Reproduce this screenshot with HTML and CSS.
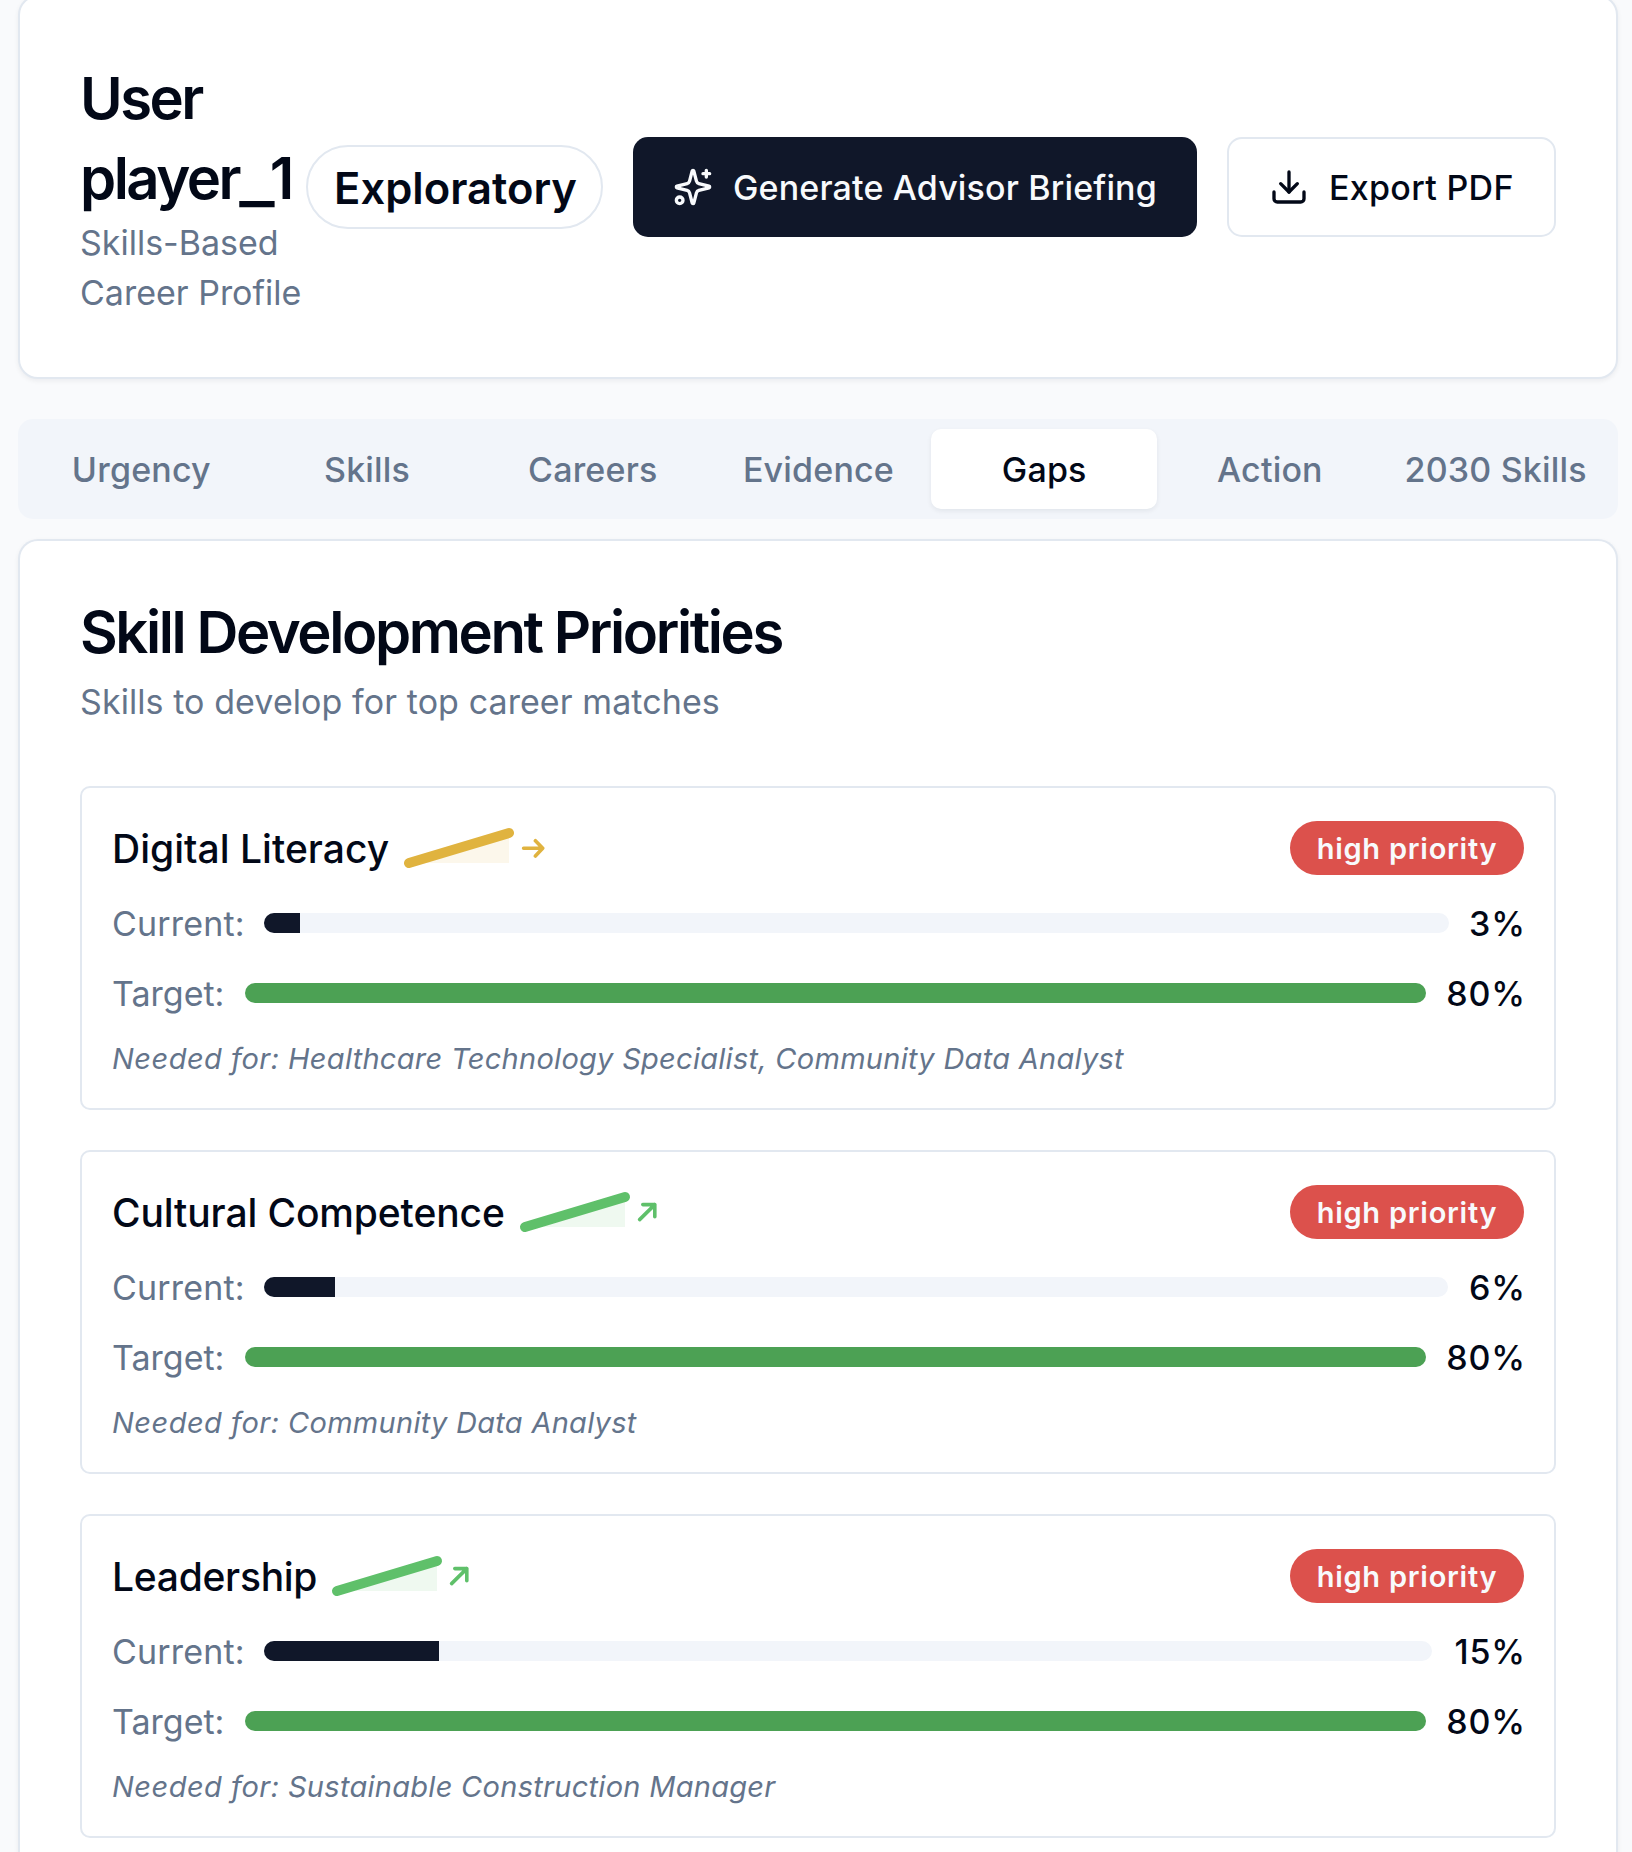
FILE: index.html
```html
<!DOCTYPE html>
<html lang="en">
<head>
<meta charset="utf-8">
<title>Skills-Based Career Profile</title>
<link rel="stylesheet" href="styles.css">
</head>
<body>
<main class="page">
  <header class="card profile">
    <div class="profile-name">
      <h1 class="title user-title">User<br>player<span class="underscore">_</span>1</h1>
      <p class="sub profile-sub">Skills-Based<br>Career Profile</p>
    </div>
    <span class="stage">Exploratory</span>
    <button class="btn btn-primary">
      <svg class="icon" viewBox="0 0 24 24"><path d="M9.937 15.5A2 2 0 0 0 8.5 14.063l-6.135-1.582a.5.5 0 0 1 0-.962L8.5 9.936A2 2 0 0 0 9.937 8.5l1.582-6.135a.5.5 0 0 1 .963 0L14.063 8.5A2 2 0 0 0 15.5 9.937l6.135 1.581a.5.5 0 0 1 0 .964L15.5 14.063a2 2 0 0 0-1.437 1.437l-1.582 6.135a.5.5 0 0 1-.963 0z"/><path d="M20 2v4M22 4h-4"/><circle cx="4" cy="20" r="2"/></svg>
      <span class="btn-text">Generate Advisor Briefing</span>
    </button>
    <button class="btn btn-outline">
      <svg class="icon" viewBox="0 0 24 24"><path d="M21 15v4a2 2 0 0 1-2 2H5a2 2 0 0 1-2-2v-4"/><path d="M7 10l5 5 5-5"/><path d="M12 15V3"/></svg>
      <span class="btn-text">Export PDF</span>
    </button>
  </header>

  <nav class="tabs">
    <a class="tab">Urgency</a>
    <a class="tab">Skills</a>
    <a class="tab">Careers</a>
    <a class="tab">Evidence</a>
    <a class="tab active">Gaps</a>
    <a class="tab">Action</a>
    <a class="tab">2030 Skills</a>
  </nav>

  <section class="card gaps">
    <h2 class="title gaps-title">Skill Development Priorities</h2>
    <p class="sub gaps-sub">Skills to develop for top career matches</p>

    <div class="list">
      <article class="skill">
        <div class="skill-head">
          <h3 class="skill-name">Digital Literacy</h3>
          <svg class="spark flat" viewBox="0 0 110 40"><path class="area" d="M5 35L105 5V35Z"/><path class="line" d="M5 35L105 5"/></svg>
          <svg class="trend flat" viewBox="0 0 24 24"><path d="M2.6 12.3H21M14.4 4.7L21.7 12.3L14.4 20"/></svg>
          <span class="priority">high priority</span>
        </div>
        <div class="meter"><span class="label label-current">Current:</span><div class="bar"><div class="fill" style="width:3.05%"></div></div><span class="value">3%</span></div>
        <div class="meter"><span class="label label-target">Target:</span><div class="bar target"></div><span class="value wide">80%</span></div>
        <p class="needed"><span class="lead">Needed for:</span> Healthcare Technology Specialist, Community Data Analyst</p>
      </article>

      <article class="skill">
        <div class="skill-head">
          <h3 class="skill-name snug">Cultural Competence</h3>
          <svg class="spark up" viewBox="0 0 110 40"><path class="area" d="M5 35L105 5V35Z"/><path class="line" d="M5 35L105 5"/></svg>
          <svg class="trend up" viewBox="0 0 24 24"><path d="M2.6 19.6L17.8 4.6M5.8 4.6H17.8V16.8"/></svg>
          <span class="priority">high priority</span>
        </div>
        <div class="meter"><span class="label label-current">Current:</span><div class="bar"><div class="fill" style="width:6.03%"></div></div><span class="value six">6%</span></div>
        <div class="meter"><span class="label label-target">Target:</span><div class="bar target"></div><span class="value wide">80%</span></div>
        <p class="needed"><span class="lead">Needed for:</span> Community Data Analyst</p>
      </article>

      <article class="skill">
        <div class="skill-head">
          <h3 class="skill-name tight">Leadership</h3>
          <svg class="spark up" viewBox="0 0 110 40"><path class="area" d="M5 35L105 5V35Z"/><path class="line" d="M5 35L105 5"/></svg>
          <svg class="trend up" viewBox="0 0 24 24"><path d="M2.6 19.6L17.8 4.6M5.8 4.6H17.8V16.8"/></svg>
          <span class="priority">high priority</span>
        </div>
        <div class="meter"><span class="label label-current">Current:</span><div class="bar"><div class="fill" style="width:15%"></div></div><span class="value fifteen">15%</span></div>
        <div class="meter"><span class="label label-target">Target:</span><div class="bar target"></div><span class="value wide">80%</span></div>
        <p class="needed"><span class="lead">Needed for:</span> Sustainable Construction Manager</p>
      </article>
    </div>
  </section>
</main>
</body>
</html>
```
FILE: styles.css
```css
* { box-sizing: border-box; margin: 0; padding: 0; }

html { height: 1852px; overflow: hidden; background: #f9fafc; }

body {
  height: 1852px;
  overflow: hidden;
  color: #020817;
  font-family: Inter, "Liberation Sans", sans-serif;
  font-size: 34px;
  line-height: 50px;
  white-space: nowrap;
}

.page { padding: 0 14px 0 18px; margin-top: -5px; }

.card {
  background: #fff;
  border: 2px solid #e2e8f0;
  border-radius: 20px;
  padding: 60px;
  box-shadow: 0 2px 5px rgba(15, 23, 42, .06);
}

.profile { display: flex; align-items: center; height: 384px; }
.profile-name { width: 226px; flex: none; padding-top: 2px; }

.title { font-size: 58px; line-height: 80px; font-weight: 600; letter-spacing: -2.4px; }
.user-title { letter-spacing: -2.5px; }
.underscore { display: inline-block; margin: 0 2px 0 4px; transform: translateY(1px) scale(1.3, 1.04); }

.sub { color: #64748b; font-size: 34px; line-height: 50px; letter-spacing: .08px; }
.profile-sub { letter-spacing: 0; }

.stage {
  display: flex; align-items: center; justify-content: center;
  width: 297px; height: 84px; flex: none; padding: 2px 0 0 2px;
  border: 2px solid #e2e8f0; border-radius: 42px;
  font-size: 43.5px; font-weight: 600;
}

.btn {
  display: flex; align-items: center; flex: none; gap: 20px;
  height: 100px; margin-left: 30px; padding-left: 40px;
  border: 0; border-radius: 15px;
  font: 500 34px/50px Inter, "Liberation Sans", sans-serif;
  letter-spacing: .15px;
  color: #020817; background: #fff;
}
.btn-text { padding-top: 2px; }
.btn-primary { width: 564px; background: #101729; color: #f8fafc; }
.btn-outline { width: 329px; border: 2px solid #e2e8f0; letter-spacing: .3px; }

.icon {
  width: 40px; height: 40px; flex: none;
  fill: none; stroke: currentColor; stroke-width: 2;
  stroke-linecap: round; stroke-linejoin: round;
}

.tabs {
  display: grid; grid-template-columns: repeat(7, 1fr);
  height: 100px; margin: 40px 0 20px; padding: 10px;
  background: #f2f5fa; border-radius: 15px;
}
.tab {
  display: flex; align-items: center; justify-content: center;
  padding: 2px 0 0 1px;
  color: #64748b; font-weight: 500; letter-spacing: .18px; border-radius: 10px;
}
.tab.active { background: #fff; color: #020817; box-shadow: 0 2px 5px rgba(15, 23, 42, .07); }

/* The card runs on below the fold */
.gaps { height: 1318px; padding-bottom: 0; border-bottom: 0; border-radius: 20px 20px 0 0; }
.gaps-title { line-height: 60px; padding-top: 1px; margin-bottom: 15px; }

.list { display: flex; flex-direction: column; gap: 40px; margin-top: 59px; }

.skill {
  display: flex; flex-direction: column; gap: 20px;
  padding: 30px; border: 2px solid #e2e8f0; border-radius: 10px;
}
.skill-head { display: flex; align-items: center; height: 60px; }
.skill-name { font-size: 39px; font-weight: 500; line-height: 60px; padding-top: 2px; letter-spacing: .03px; }
.skill-name.snug { letter-spacing: -.12px; }
.skill-name.tight { letter-spacing: -.28px; }

.spark { width: 110px; height: 40px; margin-left: 15px; flex: none; overflow: visible; }
.spark .line { fill: none; stroke: currentColor; stroke-width: 10; stroke-linecap: round; }
.spark .area { fill: currentColor; opacity: .1; }
.trend {
  width: 24px; height: 24px; margin-left: 7px; flex: none;
  fill: none; stroke: currentColor; stroke-width: 3.6;
  stroke-linecap: round; stroke-linejoin: round;
}
.flat { color: #e0b33f; }
.up { color: #5fc06a; }

.priority {
  display: flex; align-items: center; justify-content: center;
  width: 234px; height: 54px; margin-left: auto; padding-top: 1px;
  border-radius: 27px; background: #dc514c; color: #f8fafc;
  font-size: 29px; font-weight: 600; letter-spacing: .75px;
}

.meter { display: flex; align-items: center; gap: 20px; height: 50px; }
.label { color: #64748b; flex: none; padding-top: 2px; letter-spacing: .17px; }
.label-current { width: 132px; }
.label-target { width: 113px; letter-spacing: 0; }
.bar { flex: 1; height: 20px; border-radius: 10px; background: #f2f5fa; overflow: hidden; }
.fill { height: 20px; background: #101729; }
.bar.target { background: #4ca154; }
.value {
  width: 57px; margin-right: -2px; padding-top: 2px; flex: none;
  font-weight: 500; letter-spacing: .9px; text-align: right;
}
.value.six { width: 58px; }
.value.fifteen { width: 74px; }
.value.wide { width: 80px; }

.needed {
  padding-top: 2px; color: #64748b;
  font-size: 29px; line-height: 38px; font-style: italic; letter-spacing: .28px;
}
.needed .lead { letter-spacing: .48px; }
```
